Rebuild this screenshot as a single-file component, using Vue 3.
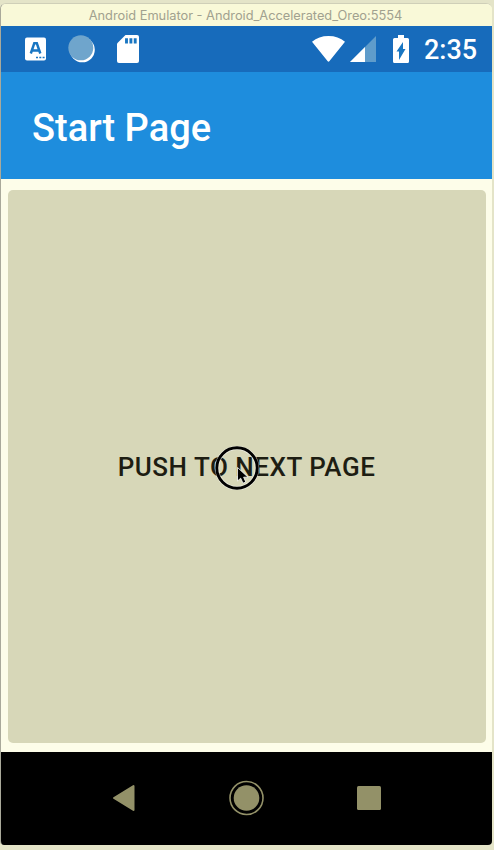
<script setup>
const title = 'Android Emulator - Android_Accelerated_Oreo:5554'
</script>

<template>
  <div class="desktop">
    <div class="window">
      <header class="titlebar"><span class="caption">{{ title }}</span></header>
      <div class="status">
        <svg class="ic-a" width="21" height="24" viewBox="0 0 21 24">
          <rect x="0" y="0.5" width="21" height="23" rx="2" fill="#fff" />
          <path d="M5.8 16.5 9.3 6.2h2.500l3.500 10.300M7.200 13.600h6.700" fill="none" stroke="#1976c2" stroke-width="2.500" />
          <path d="M11 20.500h2M14.300 20.500h2M17.600 20.500h2" stroke="#1976c2" stroke-width="1.600" />
        </svg>
        <svg class="ic-c" width="27" height="28" viewBox="0 0 27 28">
          <circle cx="14.3" cy="14.8" r="12.5" fill="#fff" />
          <circle cx="12.8" cy="12.8" r="12.5" fill="#6fa5cc" />
        </svg>
        <svg class="ic-sd" width="22" height="28" viewBox="0 0 22 28">
          <path d="M8.500 0H20a2 2 0 0 1 2 2v24a2 2 0 0 1-2 2H2a2 2 0 0 1-2-2V8.500z" fill="#fff" />
          <path d="M9.500 3.200v5.300M13.900 3.200v5.300M18.200 3.200v5.300" stroke="#1976c2" stroke-width="2.900" />
        </svg>
        <span class="grow"></span>
        <svg class="ic-wifi" width="33" height="26" viewBox="0 0 33 26">
          <path d="M0 5.800C4.500 2 10 0 16.500 0S28.500 2 33 5.800L17.500 25q-1 1.300-2 0z" fill="#fff" />
        </svg>
        <svg class="ic-sig" width="26" height="26" viewBox="0 0 26 26">
          <path d="M26 0v26H0z" fill="#5f9ccb" />
          <path d="M15 11v15H0z" fill="#fff" />
        </svg>
        <svg class="ic-bat" width="16" height="28" viewBox="0 0 16 28">
          <path d="M5 0h6v3h3.500a1.500 1.500 0 0 1 1.500 1.500v22a1.500 1.500 0 0 1-1.500 1.500h-13A1.500 1.500 0 0 1 0 26.500v-22A1.500 1.500 0 0 1 1.500 3H5z" fill="#fff" />
          <path d="M10 7v7h2.500L6 25v-8.500H3.500z" fill="#1976c2" />
        </svg>
        <span class="time">2:35</span>
      </div>
      <div class="toolbar"><h1>Start Page</h1></div>
      <main class="content">
        <button class="push">PUSH TO NEXT PAGE
          <svg class="pointer" width="44" height="44" viewBox="0 0 44 44">
            <circle cx="22" cy="22" r="20" fill="none" stroke="#fff" stroke-width="4.200" opacity=".6" />
            <circle cx="22" cy="22" r="20.200" fill="none" stroke="#000" stroke-width="2.900" />
            <path d="M22.500 21.500v13.500l3.200-2.800 2.300 5 2.800-1.200-2.200-4.800h4.400z" fill="#000" stroke="#fff" stroke-width=".8" />
          </svg>
        </button>
      </main>
      <nav class="nav">
        <svg width="24" height="28" viewBox="0 0 24 28"><path d="M20.500 2v24L1 14z" fill="#939168" stroke="#939168" stroke-width="2" stroke-linejoin="round" /></svg>
        <svg width="36" height="36" viewBox="0 0 36 36"><circle cx="17.500" cy="18" r="16.500" fill="none" stroke="#939168" stroke-width="1.600" /><circle cx="17.500" cy="18" r="12.800" fill="#939168" /></svg>
        <svg width="24" height="24" viewBox="0 0 24 24"><rect width="24" height="24" rx="1.500" fill="#939168" /></svg>
      </nav>
    </div>
  </div>
</template>

<style>
body { background: #e2e2c8; overflow: hidden; }
</style>

<style scoped>
.desktop { width: 494px; height: 850px; box-sizing: border-box; padding: 3px 2px 5px 0; background: #e4e4c8; font-family: Roboto, sans-serif; }
.window { height: 842px; box-sizing: border-box; border-left: 1px solid #a9a99a; border-top: 1px solid #cfcfb8; border-radius: 6px 6px 4px 4px; overflow: hidden; display: flex; flex-direction: column; background: #fdfde9; }
.titlebar { height: 22px; flex: none; box-sizing: border-box; padding: 2px 2px 0 0; display: flex; justify-content: center; align-items: center; background: #f9f9d8; }
.caption { font: 12.8px/20px Inter, sans-serif; color: #a1a18f; white-space: nowrap; }
.status { height: 46px; flex: none; display: flex; align-items: center; padding: 0 15px 0 24px; background: #176bbb; }
.ic-c { margin-left: 22px; }
.ic-sd { margin-left: 22px; }
.grow { flex: 1; }
.ic-sig { margin-left: 5px; }
.ic-bat { margin-left: 17px; }
.time { margin-left: 15px; padding-top: 2px; font-size: 27px; font-weight: 500; color: #fff; line-height: 44px; width: 53px; white-space: nowrap; }
.toolbar { height: 107px; flex: none; box-sizing: border-box; display: flex; align-items: center; padding: 4px 0 0 31px; background: #1e8ddd; }
h1 { margin: 0; font-size: 38px; font-weight: 500; line-height: 46px; color: #fff; }
.content { height: 573px; flex: none; box-sizing: border-box; padding: 11px 6px 9px 7px; display: flex; background: #fdfde9; }
.push { position: relative; flex: 1; border: 0; border-radius: 5px; background: #d7d7b8; color: #1d1d12; font: 500 26px/32px Roboto, sans-serif; letter-spacing: .52px; padding: 0 1px 0 0; }
.pointer { position: absolute; left: 207px; top: 256px; }
.nav { flex: 1; box-sizing: border-box; display: flex; justify-content: center; align-items: center; gap: 92px; padding: 0 0 2px; background: #000; }
</style>
